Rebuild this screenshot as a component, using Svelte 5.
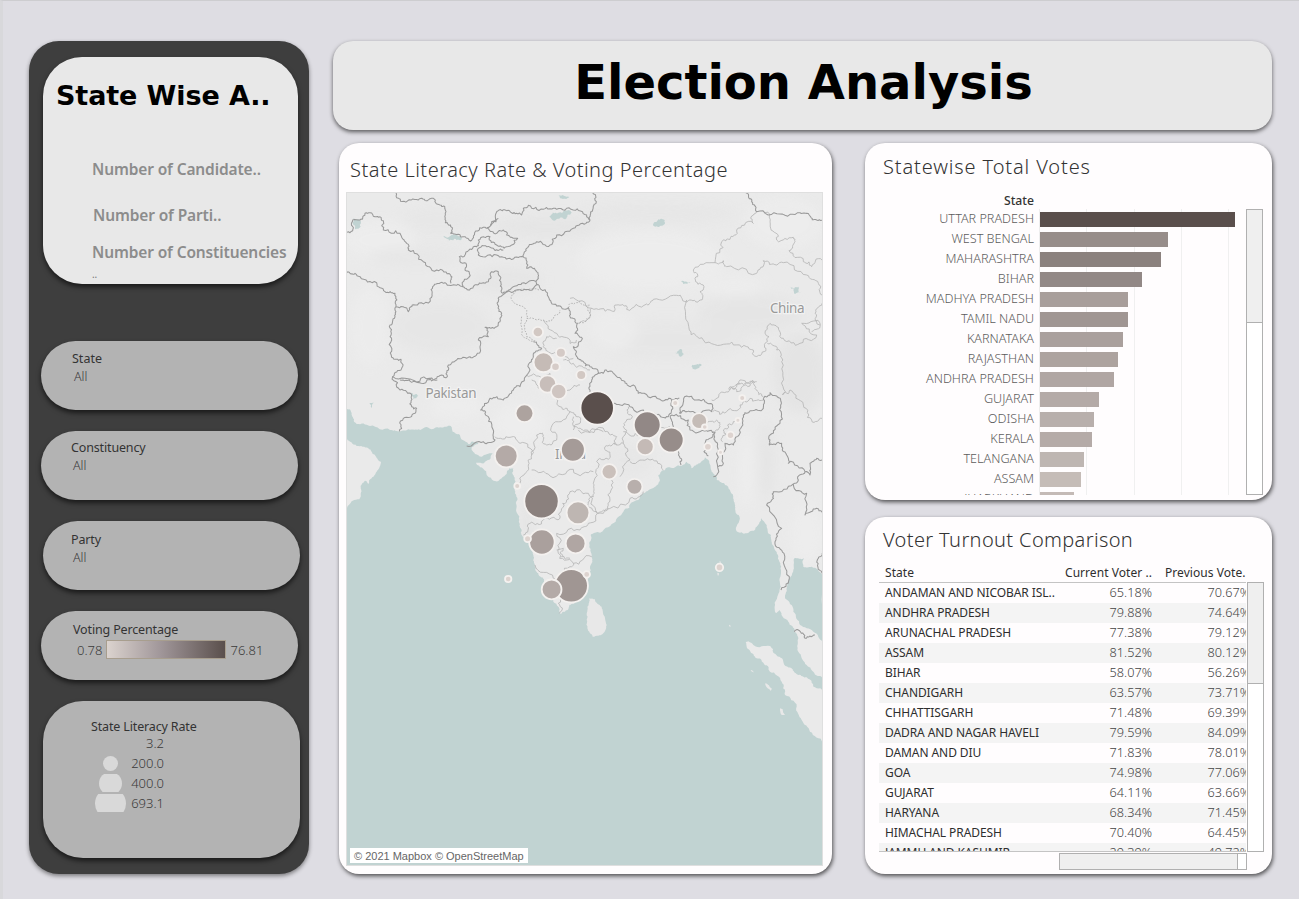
<script>
  const bars = [
    ['UTTAR PRADESH', 195, '#5a4f4c'],
    ['WEST BENGAL', 128, '#978d8a'],
    ['MAHARASHTRA', 121, '#8b817e'],
    ['BIHAR', 102, '#928886'],
    ['MADHYA PRADESH', 88, '#a89e9b'],
    ['TAMIL NADU', 88, '#a09693'],
    ['KARNATAKA', 83, '#aaa09d'],
    ['RAJASTHAN', 78, '#ada39f'],
    ['ANDHRA PRADESH', 74, '#b0a6a3'],
    ['GUJARAT', 59, '#b4aaa7'],
    ['ODISHA', 54, '#b8afac'],
    ['KERALA', 52, '#b5aba8'],
    ['TELANGANA', 44, '#beb6b2'],
    ['ASSAM', 41, '#c5bcb7'],
    ['JHARKHAND', 34, '#c4bab6'],
  ];

  const rows = [
    ['ANDAMAN AND NICOBAR ISL..', '65.18%', '70.67%'],
    ['ANDHRA PRADESH', '79.88%', '74.64%'],
    ['ARUNACHAL PRADESH', '77.38%', '79.12%'],
    ['ASSAM', '81.52%', '80.12%'],
    ['BIHAR', '58.07%', '56.26%'],
    ['CHANDIGARH', '63.57%', '73.71%'],
    ['CHHATTISGARH', '71.48%', '69.39%'],
    ['DADRA AND NAGAR HAVELI', '79.59%', '84.09%'],
    ['DAMAN AND DIU', '71.83%', '78.01%'],
    ['GOA', '74.98%', '77.06%'],
    ['GUJARAT', '64.11%', '63.66%'],
    ['HARYANA', '68.34%', '71.45%'],
    ['HIMACHAL PRADESH', '70.40%', '64.45%'],
    ['JAMMU AND KASHMIR', '29.39%', '49.72%'],
  ];

  const marks = [
    [537.7, 332, 4.3, '#d2c8c3'], [560.7, 352.7, 4, '#d4cac6'], [543.3, 362.3, 9, '#c5bbb6'],
    [555.3, 366.7, 3.3, '#d6ccc8'], [581, 375, 4, '#d2c8c3'], [547.3, 384, 7.8, '#c8beba'],
    [558.5, 391.5, 6.8, '#cfc5c1'], [524.3, 413.3, 8, '#ada39f'], [506, 456, 10.5, '#b4aaa7'],
    [572.7, 449.7, 11, '#a59b98'], [517, 486, 2, '#ddd3cf'], [541.3, 501.3, 16.3, '#8b817e'],
    [577.8, 512.8, 10.5, '#beb6b2'], [541.7, 542, 11.8, '#aaa09d'], [575.4, 543.4, 9, '#b0a6a3'],
    [527.4, 538.7, 2.5, '#ddd3cf'], [508, 579, 2.3, '#ddd3cf'], [571, 585.8, 15.8, '#a09693'],
    [551.4, 589.4, 9, '#b4aaa7'], [586.5, 574.4, 2.4, '#ddd3cf'], [597, 408, 15.8, '#5a4f4c'],
    [647, 424.8, 12.5, '#928886'], [671, 440, 11.5, '#978d8a'], [645, 446.7, 7.6, '#c4bab6'],
    [699, 421, 7, '#c5bcb7'], [704.5, 427, 1.8, '#ddd3cf'], [675, 403, 2, '#ddd3cf'],
    [707.7, 446.7, 2.8, '#ddd3cf'], [720.3, 452.3, 1.5, '#e0d8d5'], [730.3, 435.3, 2.7, '#ddd3cf'],
    [737.7, 420.3, 1.5, '#e0d8d5'], [742, 398, 2, '#ddd3cf'], [609, 471.7, 6.7, '#cac0bb'],
    [634.3, 486.7, 7, '#b8afac'], [719.3, 567.4, 2.8, '#ddd3cf'],
  ];

  // Map outlines are kept at three units per pixel, measured from the map card's corner.
  const coast = '20,804 35,820 42,845 50,852 90,858 150,870 178,874 210,869 245,868 255,862 275,868 300,862 318,860 332,858 338,875 360,886 368,900 385,912 410,905 415,912 395,922 395,930 405,942 425,950 440,943 458,940 452,952 440,962 425,970 408,968 412,975 440,1005 465,1023 485,1015 500,1002 508,985 520,985 522,1010 528,1040 525,1060 530,1100 538,1140 545,1170 552,1195 570,1215 580,1245 585,1275 595,1300 612,1318 625,1340 635,1370 640,1385 655,1400 662,1422 675,1415 688,1395 715,1380 735,1360 745,1335 742,1320 750,1280 755,1250 748,1220 752,1185 765,1178 815,1152 850,1115 880,1085 910,1060 945,1040 960,1020 955,1005 975,990 1005,982 1025,977 1040,965 1055,985 1080,970 1095,952 1108,965 1115,995 1130,1020 1155,1035 1170,1050 1180,1070 1185,1100 1196,1125 1188,1170 1205,1177 1220,1180 1250,1160 1265,1135 1280,1160 1293,1185 1298,1215 1315,1250 1323,1290 1320,1330 1312,1370 1308,1420 1318,1410 1345,1445 1363,1475 1375,1495 1378,1540 1400,1575 1420,1595 1450,1615 1450,1650 1430,1645 1400,1612 1375,1605 1358,1588 1330,1565 1302,1540 1290,1518 1240,1515 1225,1504 1217,1506 1230,1532 1250,1555 1270,1568 1290,1595 1325,1625 1335,1665 1370,1700 1385,1740 1410,1775 1450,1808';
  const oman = '15,1108 38,1082 58,1078 62,1045 75,1022 85,1032 95,1015 110,995 123,965 105,945 85,925 50,918 30,905 15,880';
  const gulf = '1363,1255 1392,1255 1390,1280 1415,1280 1450,1304 1450,1505 1420,1475 1400,1465 1380,1455 1360,1415 1355,1395 1335,1375 1340,1345 1352,1310 1360,1290 1363,1255';
  const islands = [
    '748,1375 742,1400 740,1440 742,1465 758,1490 775,1487 795,1473 800,1455 795,1435 785,1400 765,1378 748,1375',
    '1276,1630 1295,1645 1292,1653 1280,1642 1276,1630',
    '1320,1705 1328,1708 1335,1725 1325,1725 1320,1705',
    '1232,1590 1243,1597 1234,1594 1232,1590',
    '1167,1454 1173,1459 1169,1460 1167,1454',
    '1139,1262 1143,1275 1140,1285 1139,1262',
    '1132,1298 1137,1300 1134,1308 1132,1298',
  ];
  const lakes = [
    '628,230 655,218 695,218 680,235 645,242 628,230',
    '310,288 340,285 365,298 335,300 310,288',
    '40,235 60,240 62,260 45,268 38,250 40,235',
    '655,165 688,172 675,176 655,165',
    '940,257 955,238 975,248 965,257 940,257',
    '1023,424 1052,429 1030,432 1023,424',
    '1350,440 1375,440 1385,460 1365,462 1350,440',
    '1005,638 1025,628 1032,642 1020,650 1005,638',
    '1058,674 1085,674 1075,685 1058,686 1058,674',
    '215,758 235,768 220,778 215,758',
    '88,790 102,788 95,804 88,790',
  ];
  const borders = [
    '168,158 192,184 235,180 262,182 280,175 300,195 316,210 316,248 332,255 332,280 355,283 375,290 392,303 400,288 430,262 460,248 475,212 500,212 530,220 545,225 550,205 565,196 610,208 650,208 700,210 740,225 750,240',
    '758,158 768,190 758,210 750,240 738,250 700,265 650,285 630,315 590,305 560,325 550,350 510,355 490,352 470,345 415,345 415,325 440,320 460,325 490,330',
    '400,320 375,345 358,350 360,365 378,370 375,390 388,400 370,440',
    '475,235 443,265 470,280 490,270 500,285 533,295 500,320 470,315 450,290 415,300 410,320 400,320',
    '20,277 38,272 38,240 60,240 75,220 90,218 105,230 130,242 130,270 180,280 200,310 205,330 250,365 290,390 332,405 332,430',
    '20,398 45,400 60,410 110,428 135,455 165,460 168,500 205,515 225,495 270,475 278,440 310,430 345,435 375,445 400,440 425,430 445,425 455,395 475,395 483,430 488,460',
    '597,435 580,445 550,450 510,455 488,465 475,485 485,520 480,545 470,560 435,562 445,590 415,600 412,640 390,650 350,660 325,675 322,710 290,715 230,726 158,710 185,685 183,658 155,652 155,600 148,560 165,530 168,500',
    '158,710 180,750 200,755 215,765 215,800 230,805 225,820 190,835 178,874',
    '488,460 520,440 545,430 590,432 595,415 583,385 560,385 548,350',
    '180,720 215,727 260,722 292,720',
    '597,435 625,470 650,498 685,503 690,530 712,550 705,580 725,600 715,615 700,620 710,650 730,665 750,680 778,700 795,690 820,700 850,722 880,735 905,760 960,778 995,780 1018,775',
    '778,700 755,720 750,750 780,775 825,790 870,800 895,815 950,825 985,830 993,820 995,780',
    '1018,820 1020,810 1040,768 1090,778 1102,790 1118,795 1115,815 1050,815 1018,820',
    '995,825 1045,840 1050,870 1100,872 1125,878 1122,895 1132,920 1130,1005 1120,1010',
    '995,825 1000,860 1000,900 1017,940 1023,975',
    '1123,880 1095,910 1092,935 1105,948',
    '1270,775 1270,805 1235,812 1210,825 1198,870 1180,915 1155,910 1150,970 1135,980',
    '1270,775 1290,758 1310,768 1322,795 1320,850 1290,885 1288,915 1325,910 1340,945 1345,970 1395,995 1410,1005 1410,970 1430,955 1446,960',
    '1395,995 1375,1020 1360,1032 1300,1055 1295,1080 1280,1095 1325,1165 1305,1205 1332,1240 1348,1310 1323,1350',
    '1360,1032 1400,1060 1395,1125 1430,1105 1446,1117',
    '1446,1240 1432,1260 1446,1300',
    '1363,1475 1375,1470 1395,1495 1425,1485',
    '1217,158 1235,185 1250,215 1320,222 1380,218 1410,228 1430,240 1446,241',
    '580,605 605,625 580,650 570,690 540,740 520,750 490,780 450,775 422,810 445,830 460,880 465,900 430,905 380,918',
  ];
  const provinces = [
    '690,475 755,505 810,510 830,495 860,508 920,492 940,478 1010,466 1045,482 1082,480 1080,455 1092,440 1065,415 1060,390 1125,368 1145,305 1170,298 1190,270 1240,250 1242,222 1250,215',
    '1275,218 1292,265 1310,300 1360,292 1365,305 1347,332 1390,365 1415,380 1446,360',
    '1125,368 1150,362 1160,380 1250,400 1270,362 1310,375 1330,368 1400,405 1435,430 1446,465',
    '1040,480 1048,570 1090,600 1160,612 1220,620 1240,645 1278,632 1282,605 1285,555 1310,560 1330,595 1380,610 1430,585 1385,550 1440,555',
    '1282,610 1310,630 1325,665 1332,750 1328,765 1350,750 1390,795 1415,840 1446,835',
    '1446,490 1425,520 1440,560 1415,575',
    '1115,780 1140,760 1170,740 1200,732 1240,730 1250,750 1270,770',
    '1118,815 1160,815 1200,795 1230,775 1270,780',
    '1175,740 1190,755 1230,738 1245,728',
    '755,505 740,540 715,550',
    '610,540 650,580 690,610 710,600',
    '650,595 620,590 610,620 640,640 670,650 700,655',
    '560,705 600,710 630,700 650,740 690,750 720,735',
    '575,720 590,735 620,740 650,760 660,800 690,815 715,830 700,870',
    '465,890 510,892 540,910 575,945 565,980 540,1030',
    '575,945 590,885 610,885 620,915 650,900 640,850 690,815',
    '575,990 630,1008 700,988 760,995',
    '550,1185 570,1150 610,1140 660,1135 668,1090 690,1055 745,1060 770,1120',
    '650,1180 720,1170 745,1150 790,1120 870,1075 910,1055',
    '650,1180 655,1240 700,1270 755,1250',
    '650,1230 670,1225 665,1250 690,1255',
    '585,1275 640,1315 690,1280 700,1270',
    '658,1420 662,1380 640,1350',
    '715,870 795,875 830,890 830,915 795,920 810,945 770,965 760,1030 760,1070 745,1100 785,1115 810,1080 815,1020',
    '830,915 850,910 850,860 875,835 865,800',
    '850,910 870,960 840,1010',
    '870,965 930,960 970,990',
    '850,875 900,885 950,870 990,860',
    '670,660 700,670 750,690',
    '700,830 705,860 735,870 790,875',
    '1095,845 1130,840 1140,860 1125,878',
    '1148,905 1160,885 1150,870 1180,845 1200,835',
    '1170,750 1200,720 1230,730 1250,725',
  ];
  const disputed = [
    '597,450 530,450 515,480 560,520 560,535 610,540 640,535 660,510',
    '545,530 550,590 580,605',
    '560,540 560,590 590,605',
    '685,503 695,490 720,485 748,495 750,530 735,545 712,550',
  ];

  let seed = 11;
  const rnd = () => {
    seed = (seed * 16807) % 2147483647;
    return seed / 2147483647 - 0.5;
  };
  // Breaks each straight run into short irregular steps so it reads as a surveyed line.
  function trace(str, amp = 0.5) {
    let pts = str.split(' ').map((p) => p.split(',').map(Number));
    for (let k = 0; k < 3; k++) {
      const out = [pts[0]];
      for (let i = 1; i < pts.length; i++) {
        const [x1, y1] = pts[i - 1];
        const [x2, y2] = pts[i];
        const len = Math.hypot(x2 - x1, y2 - y1);
        if (len > 6) {
          const o = (rnd() * Math.min(len, 26) * amp) / len;
          out.push([(x1 + x2) / 2 - (y2 - y1) * o, (y1 + y2) / 2 + (x2 - x1) * o]);
        }
        out.push(pts[i]);
      }
      pts = out;
    }
    return pts.map((p) => p[0].toFixed(1) + ' ' + p[1].toFixed(1)).join('L');
  }
  const sea = 'M' + trace(coast, 0.4) + 'L1450 2190L10 2190L' + trace(oman, 0.4) + 'L15 804Z';
  const gulfPath = 'M' + trace(gulf, 0.3) + 'Z';
  const islandPaths = islands.map((d) => 'M' + trace(d, 0.3) + 'Z').join('');
  const lakePaths = lakes.map((d) => 'M' + trace(d, 0.6) + 'Z').join('');
  const borderPaths = borders.map((d) => 'M' + trace(d, 0.6)).join('');
  const provincePaths = provinces.map((d) => 'M' + trace(d, 0.7)).join('');
  const disputedPaths = disputed.map((d) => 'M' + trace(d)).join('');

  const shades = [
    [120, 300, 110, 60, '#efefef'], [300, 240, 120, 40, '#e5e5e5'], [230, 350, 140, 30, '#e5e5e5'],
    [300, 560, 150, 80, '#e4e4e4'], [90, 560, 60, 120, '#eeeeee'], [500, 420, 110, 40, '#e3e3e3'],
    [620, 260, 160, 30, '#e2e2e2'], [950, 220, 240, 26, '#e4e4e4'], [930, 360, 220, 90, '#efefef'],
    [1330, 250, 120, 80, '#eeeeee'], [1230, 520, 160, 60, '#e3e3e3'], [1180, 440, 90, 30, '#efefef'],
    [980, 600, 240, 60, '#e5e5e5'], [820, 570, 70, 60, '#eeeeee'], [1380, 700, 80, 120, '#e1e1e1'],
    [1220, 990, 24, 110, '#f0f0f0'], [1280, 960, 24, 120, '#e2e2e2'], [1400, 1180, 50, 90, '#efefef'],
    [540, 850, 80, 60, '#efefef'], [560, 1150, 14, 120, '#dfdfdf'], [860, 960, 80, 50, '#e5e5e5'],
    [350, 800, 80, 40, '#efefef'], [640, 700, 70, 60, '#eeeeee'],
  ];
</script>

<div class="page">
  <aside class="side">
    <section class="summary">
      <h2>State Wise A..</h2>
      <p class="s1">Number of Candidate..</p>
      <p class="s2">Number of Parti..</p>
      <p class="s3">Number of Constituencies</p>
      <p class="s4">..</p>
    </section>
    <section class="pill state"><b>State</b><span>All</span></section>
    <section class="pill cons"><b>Constituency</b><span>All</span></section>
    <section class="pill shift party"><b>Party</b><span>All</span></section>
    <section class="pill voting">
      <b>Voting Percentage</b>
      <div class="ramp"><span>0.78</span><i></i><span>76.81</span></div>
    </section>
    <section class="pill shift literacy">
      <b>State Literacy Rate</b>
      <ul>
        <li><i></i><span>3.2</span></li>
        <li><i><em style="width:15px;height:15px"></em></i><span>200.0</span></li>
        <li><i><em style="width:23px;height:23px"></em></i><span>400.0</span></li>
        <li><i><em style="width:31px;height:31px"></em></i><span>693.1</span></li>
      </ul>
    </section>
  </aside>

  <main>
    <header><h1>Election Analysis</h1></header>
    <div class="cols">
      <section class="card mapcard">
        <h3>State Literacy Rate &amp; Voting Percentage</h3>
        <div class="map">
          <svg viewBox="347 193 475 672" width="475" height="672">
            <defs><filter id="soft" x="-50%" y="-50%" width="200%" height="200%"><feGaussianBlur stdDeviation="18" /></filter></defs>
            <rect x="346" y="192" width="477" height="674" fill="#eaeaea" />
            <g transform="translate(340 140) scale(.33333)">
              <g filter="url(#soft)" opacity=".6">
                {#each shades as [x, y, rx, ry, c]}<ellipse cx={x} cy={y} {rx} {ry} fill={c} />{/each}
              </g>
              <path d={sea + gulfPath} fill="#c1d3d2" />
              <path d={islandPaths} fill="#e8e8e8" />
              <path d={lakePaths} fill="#c1d3d2" />
              <path d={provincePaths} fill="none" stroke="#b4b4b4" stroke-width="2.4" />
              <path d={disputedPaths} fill="none" stroke="#adadad" stroke-width="2.6" stroke-dasharray="5 4" />
              <path d={borderPaths} fill="none" stroke="#999" stroke-width="3.1" stroke-linejoin="round" />
            </g>
            <g class="places">
              <text x="425.5" y="397.5" textLength="51">Pakistan</text>
              <text x="770" y="312.8" textLength="34.5">China</text>
              <text x="555" y="459" textLength="31">India</text>
            </g>
            {#each marks as [x, y, r, c]}
              <circle cx={x + 0.2} cy={y} r={r + 0.9} fill={c} stroke="#f4f1ef" stroke-width="1.8" />
            {/each}
          </svg>
          <small>© 2021 Mapbox © OpenStreetMap</small>
        </div>
      </section>

      <div class="right">
        <section class="card votes">
          <h3>Statewise Total Votes</h3>
          <div class="body">
            <div class="chart">
              <div class="axis">State</div>
              <div class="plot">
                {#each bars as [name, w, color]}
                  <div class="bar"><span>{name}</span><i style="width:{w}px;background:{color}"></i></div>
                {/each}
              </div>
            </div>
            <div class="vscroll"><i></i></div>
          </div>
        </section>

        <section class="card turnout">
          <h3>Voter Turnout Comparison</h3>
          <div class="body">
            <div class="table">
              <div class="row head"><b>State</b><b>Current Voter ..</b><b>Previous Vote.</b></div>
              <div class="rows">
                {#each rows as [name, a, b]}
                  <div class="row"><b>{name}</b><span>{a}</span><span>{b}</span></div>
                {/each}
              </div>
            </div>
            <div class="vscroll"><i></i></div>
          </div>
          <div class="hscroll"><i></i></div>
        </section>
      </div>
    </div>
  </main>
</div>

<style>
  :global(body) { background: #e2e2e4; }
  * { box-sizing: border-box; margin: 0; padding: 0; }
  .page {
    width: 1299px; height: 899px; display: flex; gap: 24px; overflow: hidden;
    padding: 40px 27px 25px 26px; background: #dedde3;
    border-top: 1px solid #cdcdd0; border-left: 3px solid #d8d8db;
    font-family: "Noto Sans", sans-serif; font-size: 12.5px; color: #555; white-space: nowrap;
  }
  .side {
    width: 280px; height: 833px; background: #3e3e3e; border-radius: 30px; padding: 16px 0 0 12px;
    box-shadow: 0 2px 4px rgba(0, 0, 0, .45);
  }
  .summary {
    width: 255px; height: 227px; margin: 0 0 57px 2px; padding: 23px 0 0 12px; border-radius: 39px;
    background: #e8e8e8; box-shadow: 0 3px 5px rgba(0, 0, 0, .6);
  }
  h2 { font: bold 27px/32px "DejaVu Sans", sans-serif; color: #000; padding-left: 1px; letter-spacing: -.1px; }
  .summary p { font-size: 15.5px; line-height: 20px; font-weight: 600; color: #8c8c8c; padding-left: 37px; letter-spacing: -.13px; }
  .summary .s1 { margin-top: 47px; }
  .summary .s2 { margin-top: 26px; padding-left: 38px; }
  .summary .s3 { margin-top: 17px; }
  .summary .s4 { font-size: 10px; line-height: 14px; margin-top: 5px; color: #777; font-weight: 400; }
  .pill {
    width: 257px; height: 69px; margin-bottom: 21px; border-radius: 34.5px; background: #b3b3b3;
    padding: 9px 0 0 31px; box-shadow: 0 3px 5px rgba(0, 0, 0, .6); display: flex; flex-direction: column;
  }
  .pill b { font-size: 12.5px; line-height: 18px; font-weight: 450; color: #333; letter-spacing: -.15px; }
  .pill > span { font-weight: 300; line-height: 18px; padding-left: 2px; color: #3a3a3a; }
  .shift { margin-left: 2px; }
  .state b { letter-spacing: 0; }
  .cons { padding: 8px 0 0 30px; }
  .party { padding: 10px 0 0 28px; }
  .voting { padding: 10px 0 0 32px; }
  .ramp { display: flex; align-items: center; font-weight: 300; font-size: 13px; color: #3a3a3a; padding: 1px 0 0 4px; line-height: 18px; }
  .ramp i { width: 120px; height: 19px; margin: 0 4px; border: 1px solid #a89e8e; background: linear-gradient(90deg, #dbd3ce, #a1979a 45%, #5a4f4c); }
  .literacy { height: 157px; border-radius: 40px; padding: 16px 0 0 48px; }
  .literacy b { line-height: 17px; padding-top: 1px; height: 17px; }
  .literacy ul { list-style: none; }
  .literacy li { display: flex; height: 18px; margin-bottom: 2px; line-height: 18px; font-weight: 300; font-size: 13px; color: #3a3a3a; }
  .literacy li i { width: 39px; height: 18px; overflow: hidden; display: flex; align-items: center; justify-content: center; }
  .literacy em { flex: none; border-radius: 50%; background: #d9d9d9; }
  .literacy li span { width: 34px; text-align: right; }

  main { width: 939px; }
  header {
    height: 89px; border-radius: 20px; background: #e8e8e8; box-shadow: 0 2px 4px rgba(0, 0, 0, .6);
    text-align: center; padding-left: 2px;
  }
  h1 { font: bold 48px/82px "DejaVu Sans", sans-serif; color: #000; }
  .cols { display: flex; justify-content: space-between; padding: 13px 0 0 6px; }
  .card { border-radius: 20px; background: #fffdfe; box-shadow: 1px 2px 4px rgba(0, 0, 0, .65); overflow: hidden; }
  h3 { font-weight: 300; font-size: 20px; line-height: 28px; color: #333; }
  .mapcard { width: 493px; height: 731px; padding: 13px 0 0 7px; }
  .mapcard h3 { padding-left: 4px; height: 36px; letter-spacing: .49px; }
  .votes h3 { letter-spacing: .87px; }
  .turnout h3 { letter-spacing: .36px; }
  .map { width: 477px; height: 674px; border: 1px solid #dfdfdf; display: grid; }
  .map > * { grid-area: 1 / 1; }
  .map svg { display: block; }
  .map small {
    place-self: end start; margin: 0 0 2px 3px; padding: 0 4px; height: 15px; background: #fff; color: #666;
    font: 11px/16px "Liberation Sans", sans-serif; z-index: 1;
  }
  .places text { font-size: 13.5px; fill: #999; paint-order: stroke; stroke: #f2f2f2; stroke-width: 2.5px; }
  .right { display: flex; flex-direction: column; gap: 17px; width: 407px; }
  .right .card { height: 357px; }
  .right h3 { padding-left: 18px; }
  .votes { padding-top: 10px; }
  .body { display: flex; }
  .votes .chart { width: 381px; padding-top: 10px; }
  .axis { width: 169px; height: 18px; line-height: 20px; text-align: right; font-weight: 500; color: #333; font-size: 12.2px; }
  .plot {
    height: 286px; overflow: hidden;
    background: linear-gradient(#eee, #eee) 174px 0/1px 100% no-repeat, linear-gradient(#f0f0f0, #f0f0f0) 221px 0/1px 100% no-repeat,
      linear-gradient(#f0f0f0, #f0f0f0) 269px 0/1px 100% no-repeat, linear-gradient(#f0f0f0, #f0f0f0) 316px 0/1px 100% no-repeat,
      linear-gradient(#f0f0f0, #f0f0f0) 363px 0/1px 100% no-repeat;
  }
  .bar { display: flex; height: 20px; line-height: 20px; }
  .bar span { width: 169px; margin-right: 6px; text-align: right; font-weight: 300; color: #5c5c5c; font-size: 12.6px; }
  .bar i { height: 15px; margin-top: 3px; }
  .vscroll { width: 17px; border: 1px solid #b0b0b0; background: #fff; }
  .vscroll i { display: block; background: #efefef; border-bottom: 1px solid #b0b0b0; }
  .votes .vscroll { height: 286px; margin-top: 28px; }
  .votes .vscroll i { height: 113px; }
  .turnout { padding-top: 9px; }
  .table { width: 367px; margin: 9px 1px 0 14px; padding-top: 0; }
  .row { display: grid; grid-template-columns: 185px 88px 102px; height: 20px; line-height: 20px; }
  .row b { font-weight: 450; color: #2e2e2e; padding-left: 6px; font-size: 12px; letter-spacing: -.08px; }
  .row span { font-weight: 300; font-size: 12.7px; line-height: 19px; text-align: right; color: #444; }
  .row span:nth-child(3) { padding-right: 4px; }
  .row:nth-child(even) { background: #f4f4f4; }
  .head { height: 20px; border-bottom: 1px solid #c4c4c4; grid-template-columns: 185px 98px 84px; line-height: 20px; }
  .row.head b { letter-spacing: .05px; }
  .head b:nth-child(2) { padding-left: 1px; }
  .head b:nth-child(3) { padding-left: 3px; }
  .rows { height: 269px; overflow: hidden; border-bottom: 1px solid #c4c4c4; }
  .turnout .vscroll { height: 270px; margin-top: 28px; }
  .turnout .vscroll i { height: 101px; }
  .hscroll { width: 188px; height: 17px; margin: 1px 0 0 194px; border: 1px solid #b0b0b0; background: #fff; }
  .hscroll i { display: block; width: 178px; height: 15px; background: #efefef; border-right: 1px solid #b0b0b0; }
</style>
